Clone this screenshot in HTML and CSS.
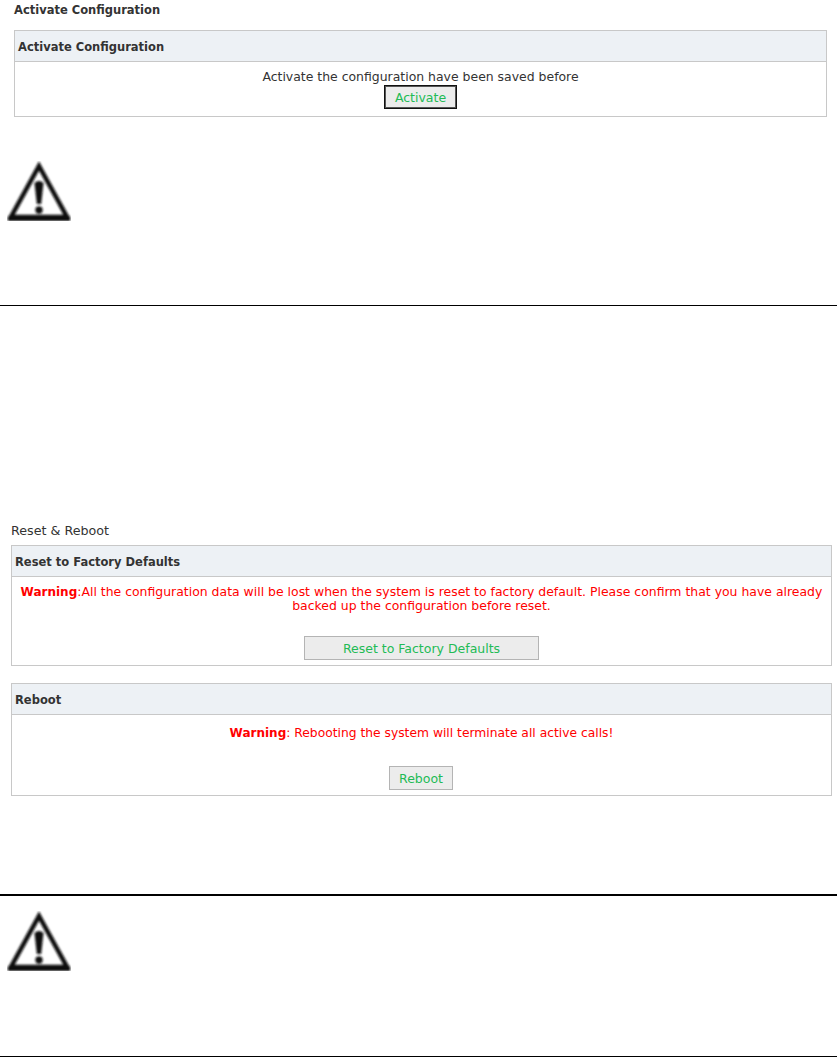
FILE: index.html
```html
<!DOCTYPE html>
<html lang="en">
<head>
    <meta charset="UTF-8">
    <title>Activate Configuration</title>
    <link rel="stylesheet" href="styles.css">
</head>
<body>
    <svg width="0" height="0" class="defs">
        <defs>
            <filter id="soft"><feGaussianBlur stdDeviation="0.8"/></filter>
            <symbol id="warn" viewBox="0 0 64 60">
                <g filter="url(#soft)">
                    <path d="M32 5 L60 56 H4 Z" fill="none" stroke="#111" stroke-width="4.6" stroke-linejoin="miter"/>
                    <path d="M1 55 H63 V60 H1 Z" fill="#111"/>
                    <path d="M27.5 22 Q32 18 36.5 22 L34.2 43 H29.8 Z" fill="#111"/>
                    <circle cx="32" cy="49" r="3.7" fill="#111"/>
                </g>
            </symbol>
        </defs>
    </svg>

    <div class="sheet sheet-one">
        <div class="page-title bold">Activate Configuration</div>
        <div class="panel">
            <div class="panel-head">Activate Configuration</div>
            <div class="panel-body">
                <div>Activate the configuration have been saved before</div>
                <button class="btn btn-focus">Activate</button>
            </div>
        </div>
        <svg class="warn-icon"><use href="#warn"/></svg>
    </div>

    <div class="sheet sheet-two">
        <div class="page-title">Reset &amp; Reboot</div>
        <div class="panel">
            <div class="panel-head">Reset to Factory Defaults</div>
            <div class="panel-body red">
                <div class="msg"><b>Warning</b>:All the configuration data will be lost when the system is reset to factory default. Please confirm that you have already backed up the configuration before reset.</div>
                <button class="btn btn-wide">Reset to Factory Defaults</button>
            </div>
        </div>
        <div class="panel panel-reboot">
            <div class="panel-head">Reboot</div>
            <div class="panel-body red">
                <div class="msg msg-one"><b>Warning</b>: Rebooting the system will terminate all active calls!</div>
                <button class="btn btn-reboot">Reboot</button>
            </div>
        </div>
    </div>

    <div class="sheet sheet-three">
        <svg class="warn-icon"><use href="#warn"/></svg>
    </div>
</body>
</html>
```

FILE: styles.css
```css
body {
    margin: 0;
    background-color: #fff;
    font-family: "DejaVu Sans", Verdana, sans-serif;
    font-size: 12.45px;
    line-height: 14px;
    color: #333;
}
b {
    font-size: 12px;
}
.defs {
    position: absolute;
}
.sheet {
    box-sizing: border-box;
    border-bottom: 1px solid #000;
}
.sheet-one {
    height: 306px;
    padding: 3px 10px 0 14px;
}
.sheet-two {
    height: 590px;
    padding: 218px 5px 0 11px;
    border-bottom-width: 2px;
}
.sheet-three {
    height: 161px;
    padding: 15px 0 0 7px;
}
.page-title {
    height: 14px;
    margin-bottom: 7px;
    font-size: 12.7px;
}
.bold {
    font-size: 11.5px;
    font-weight: bold;
    margin-bottom: 13px;
}
.panel {
    border: 1px solid #c8c8c8;
}
.panel-reboot {
    margin-top: 17px;
}
.panel-head {
    height: 30px;
    line-height: 32px;
    padding-left: 3px;
    background-color: #edf1f5;
    border-bottom: 1px solid #c8c8c8;
    font-size: 11.5px;
    font-weight: bold;
}
.panel-body {
    padding: 8px 0 5px;
    text-align: center;
}
.sheet-one .panel-body {
    height: 41px;
}
.msg {
    padding: 0 6px;
    height: 51px;
}
.msg-one {
    height: 40px;
    padding-top: 3px;
    font-size: 12.3px;
}
.red {
    color: #f00;
}
.btn {
    display: block;
    margin: 0 auto;
    box-sizing: border-box;
    height: 24px;
    padding: 1px 0 0;
    border: 1px solid #b4b4b4;
    background-color: #ececec;
    color: #22bb55;
    font-family: inherit;
    font-size: 12.5px;
}
.btn-focus {
    width: 73px;
    margin-top: 1px;
    padding: 0;
    border: 1px solid #111;
    outline: 1px solid #555;
    outline-offset: -2px;
}
.btn-wide {
    width: 235px;
}
.btn-reboot {
    width: 64px;
    margin-left: 377px;
}
.warn-icon {
    display: block;
    width: 64px;
    height: 60px;
}
.sheet-one .warn-icon {
    margin: 44px 0 0 -7px;
}
```
